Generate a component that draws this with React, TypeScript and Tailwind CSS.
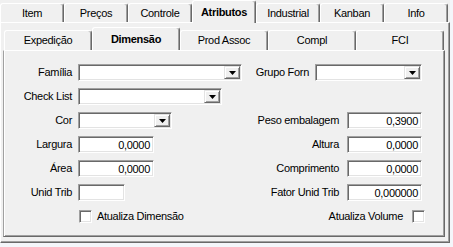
import type { ReactNode } from 'react';

const outerTabs = ['Item', 'Preços', 'Controle', 'Atributos', 'Industrial', 'Kanban', 'Info'];
const innerTabs = ['Expedição', 'Dimensão', 'Prod Assoc', 'Compl', 'FCI'];

function Tab({ label, active, width }: { label: string; active: boolean; width: string }) {
  return (
    <div
      className={`${width} flex items-center justify-center border-t border-l border-r border-t-white border-l-white border-r-[#696969] rounded-t-[3px] shadow-[inset_-1px_0_0_#a0a0a0] ${
        active ? 'h-[23px] relative z-10 -mb-px bg-[#f0f0f0] font-bold' : 'h-[20px] mt-[3px]'
      }`}
    >
      {label}
    </div>
  );
}

function Sunken({ width, children }: { width: string; children?: ReactNode }) {
  return (
    <div
      className={`${width} h-[17px] flex items-center bg-white border border-t-[#a0a0a0] border-l-[#a0a0a0] border-r-white border-b-white shadow-[inset_1px_1px_0_#696969,inset_-1px_-1px_0_#e3e3e3]`}
    >
      {children}
    </div>
  );
}

function Combo({ width }: { width: string }) {
  return (
    <Sunken width={width}>
      <div className="ml-auto mr-[1px] w-[16px] h-[13px] flex items-center justify-center bg-[#f0f0f0] border border-t-[#e3e3e3] border-l-[#e3e3e3] border-r-[#696969] border-b-[#696969] shadow-[inset_1px_1px_0_#fff,inset_-1px_-1px_0_#a0a0a0]">
        <svg width="7" height="4" viewBox="0 0 7 4">
          <path d="M0 0h7L3.5 4z" fill="#000" />
        </svg>
      </div>
    </Sunken>
  );
}

function NumBox({ width, value }: { width: string; value?: string }) {
  return (
    <Sunken width={width}>
      <span className="ml-auto pr-[3px] pt-[1px]">{value}</span>
    </Sunken>
  );
}

function Check() {
  return (
    <div className="w-[13px] h-[13px] bg-white border border-t-[#a0a0a0] border-l-[#a0a0a0] border-r-white border-b-white shadow-[inset_1px_1px_0_#696969,inset_-1px_-1px_0_#e3e3e3]" />
  );
}

function LeftField({ label, children }: { label: string; children: ReactNode }) {
  return (
    <div className="flex items-center">
      <span className="w-[68px] text-right">{label}</span>
      <div className="ml-[6px]">{children}</div>
    </div>
  );
}

function RightField({ label, children, gap = 'ml-[8px]' }: { label: string; children: ReactNode; gap?: string }) {
  return (
    <div className="ml-auto flex items-center">
      <span className="text-right">{label}</span>
      <div className={gap}>{children}</div>
    </div>
  );
}

export default function App() {
  return (
    <div className="w-[453px] h-[247px] bg-[#f4f6fa] text-[11px] leading-[13px] tracking-[-0.3px] text-black font-['Liberation_Sans',Arial,sans-serif]">
      <div className="w-[450px] h-[243px] bg-[#f0f0f0] flex flex-col">
        {/* top tabs */}
        <div className="flex h-[22px] shrink-0">
          {outerTabs.map((t) => (
            <Tab key={t} label={t} active={t === 'Atributos'} width="w-[64px]" />
          ))}
        </div>

        {/* outer page */}
        <div className="flex-1 flex flex-col pt-[4px] pl-[2px] pr-[4px] pb-[5px] border-t border-l border-t-white border-l-white border-r border-b border-r-[#696969] border-b-[#696969] shadow-[inset_-1px_-1px_0_#a0a0a0]">
          <div className="flex h-[23px] shrink-0 pl-[1px]">
            {innerTabs.map((t) => (
              <Tab key={t} label={t} active={t === 'Dimensão'} width="w-[88px]" />
            ))}
          </div>

          {/* inner page */}
          <div className="flex-1 flex flex-col gap-[7px] pt-[13px] pr-[22px] border-t border-l border-t-white border-l-[#a0a0a0] border-r border-b border-r-[#696969] border-b-[#696969] shadow-[inset_1px_0_0_#fff,inset_-1px_-1px_0_#a0a0a0]">
            <div className="flex items-center h-[17px]">
              <LeftField label="Família">
                <Combo width="w-[164px]" />
              </LeftField>
              <RightField label="Grupo Forn" gap="ml-[6px]">
                <Combo width="w-[107px]" />
              </RightField>
            </div>
            <div className="flex items-center h-[17px]">
              <LeftField label="Check List">
                <Combo width="w-[144px]" />
              </LeftField>
            </div>
            <div className="flex items-center h-[17px]">
              <LeftField label="Cor">
                <Combo width="w-[94px]" />
              </LeftField>
              <RightField label="Peso embalagem">
                <NumBox width="w-[75px]" value="0,3900" />
              </RightField>
            </div>
            <div className="flex items-center h-[17px]">
              <LeftField label="Largura">
                <NumBox width="w-[76px]" value="0,0000" />
              </LeftField>
              <RightField label="Altura">
                <NumBox width="w-[75px]" value="0,0000" />
              </RightField>
            </div>
            <div className="flex items-center h-[17px]">
              <LeftField label="Área">
                <NumBox width="w-[76px]" value="0,0000" />
              </LeftField>
              <RightField label="Comprimento">
                <NumBox width="w-[75px]" value="0,0000" />
              </RightField>
            </div>
            <div className="flex items-center h-[17px]">
              <LeftField label="Unid Trib">
                <NumBox width="w-[47px]" />
              </LeftField>
              <RightField label="Fator Unid Trib">
                <NumBox width="w-[75px]" value="0,000000" />
              </RightField>
            </div>
            <div className="flex items-center h-[13px] mt-[2px]">
              <div className="flex items-center gap-[5px] pl-[75px]">
                <Check />
                <span>Atualiza Dimensão</span>
              </div>
              <div className="ml-auto flex items-center gap-[9px] mr-[-3px]">
                <span>Atualiza Volume</span>
                <Check />
              </div>
            </div>
          </div>
        </div>
      </div>
    </div>
  );
}
